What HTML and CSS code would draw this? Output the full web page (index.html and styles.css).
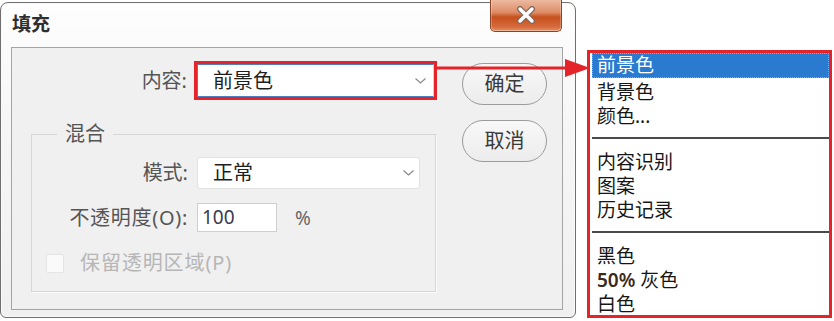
FILE: index.html
```html
<!DOCTYPE html>
<html lang="zh-CN">
<head>
<meta charset="utf-8">
<title>填充</title>
<link rel="stylesheet" href="styles.css">
</head>
<body>
<div class="dialog">
  <div class="titlebar">
    <div class="title">填充</div>
    <div class="close">
      <svg width="24" height="18" viewBox="0 0 24 18">
        <path d="M6 3 L18 15 M18 3 L6 15" stroke="#7d6a60" stroke-width="6" stroke-linecap="round"/>
        <path d="M6 3 L18 15 M18 3 L6 15" stroke="#ffffff" stroke-width="3.4" stroke-linecap="round"/>
      </svg>
    </div>
  </div>
  <div class="panel">
    <div class="leftcol">
      <div class="row-content">
        <div class="label-content">内容:</div>
        <div class="redbox">
          <div class="select-blue">
            <span class="sel-text">前景色</span>
            <svg class="chev" width="11" height="6" viewBox="0 0 11 6"><path d="M0.5 0.5 L5.5 5 L10.5 0.5" fill="none" stroke="#8a8a8a" stroke-width="1.2"/></svg>
          </div>
        </div>
      </div>
      <div class="group">
        <span class="legend">混合</span>
        <div class="grow first">
          <div class="glabel">模式:</div>
          <div class="select-plain">
            <span class="sel-text">正常</span>
            <svg class="chev" width="11" height="6" viewBox="0 0 11 6"><path d="M0.5 0.5 L5.5 5 L10.5 0.5" fill="none" stroke="#8a8a8a" stroke-width="1.2"/></svg>
          </div>
        </div>
        <div class="grow second">
          <div class="glabel wide">不透明度<span class="lat">(O):</span></div>
          <div class="input">100</div>
          <span class="pct">%</span>
        </div>
        <div class="checkrow">
          <span class="checkbox"></span>
          <span class="checklabel">保留透明区域<span class="lat">(P)</span></span>
        </div>
      </div>
    </div>
    <div class="rightcol">
      <div class="btn">确定</div>
      <div class="btn btn2">取消</div>
    </div>
  </div>
</div>

<div class="popup">
  <div class="item selected">前景色</div>
  <div class="item after-sel">背景色</div>
  <div class="item">颜色<span class="lat">...</span></div>
  <div class="sep"></div>
  <div class="item">内容识别</div>
  <div class="item">图案</div>
  <div class="item">历史记录</div>
  <div class="sep"></div>
  <div class="item">黑色</div>
  <div class="item"><span class="lat bold">50%</span> 灰色</div>
  <div class="item">白色</div>
</div>

<svg class="arrow" width="154" height="20" viewBox="0 0 154 20">
  <line x1="0" y1="10" x2="134" y2="10" stroke="#e5242a" stroke-width="3"/>
  <polygon points="128,1 153,10 128,19" fill="#e5242a"/>
</svg>
</body>
</html>
```

FILE: styles.css
```css
* { box-sizing: border-box; }

html, body {
  margin: 0;
  padding: 0;
}

body {
  width: 834px;
  height: 321px;
  background: #ffffff;
  position: relative;
  overflow: hidden;
  display: flex;
  align-items: flex-start;
  font-family: "Noto Sans", "Noto Sans CJK SC", sans-serif;
  color: #333;
}

.lat { font-family: "Noto Sans", "Noto Sans CJK SC", sans-serif; }

.dialog {
  width: 576px;
  height: 316px;
  margin-top: 2px;
  border: 1px solid #6f6f6f;
  border-radius: 8px 8px 6px 6px;
  background: linear-gradient(#fefefe 0%, #f6f6f6 40%, #f0f0f0 100%);
  box-shadow: inset 0 0 0 1px #fafafa;
  display: flex;
  flex-direction: column;
}

.titlebar {
  height: 44px;
  display: flex;
  justify-content: space-between;
  align-items: flex-start;
  padding-left: 11px;
}

.title {
  padding-top: 9px;
  font-size: 19px;
  line-height: 24px;
  font-weight: 700;
  color: #2e2e2e;
}

.close {
  width: 72px;
  height: 32px;
  margin-top: -3px;
  margin-right: 13px;
  border: 1px solid #8c4428;
  border-top: none;
  border-radius: 0 0 5px 5px;
  background: linear-gradient(#ecb9a0 0%, #de8c66 40%, #c8501e 55%, #d4683a 85%, #e68e62 100%);
  box-shadow: inset 0 -1px 0 rgba(255,255,255,0.35), inset 1px 0 0 rgba(255,255,255,0.25), inset -1px 0 0 rgba(255,255,255,0.25);
  display: flex;
  align-items: center;
  justify-content: center;
}

.close svg { margin-top: -2px; }

.panel {
  margin: 0 12px 0 10px;
  height: 263px;
  border: 1px solid #a4a4a4;
  background: #f0f0f0;
  padding-top: 13px;
  display: flex;
  align-items: flex-start;
}

.leftcol {
  display: flex;
  flex-direction: column;
}

.row-content {
  display: flex;
  align-items: center;
  height: 39px;
}

.label-content,
.glabel {
  text-align: right;
  font-size: 20px;
  line-height: 24px;
  color: #555;
}

.glabel.wide { letter-spacing: 0.7px; }

.label-content { width: 175px; margin-right: 7px; }

.redbox {
  width: 243px;
  height: 39px;
  border: 3px solid #e5242a;
}

.select-blue {
  height: 100%;
  background: #fff;
  border: 1px solid #4f7fc0;
  border-right-color: #c9d6e8;
  display: flex;
  align-items: center;
  justify-content: space-between;
  padding: 0 7px 0 15px;
}

.sel-text {
  font-size: 20px;
  line-height: 24px;
  color: #1e1e1e;
}

.chev { display: block; }

.group {
  position: relative;
  margin-top: 34px;
  margin-left: 19px;
  width: 405px;
  height: 158px;
  border: 1px solid #d6d6d6;
  box-shadow: 1px 1px 0 #fbfbfb;
}

.legend {
  position: absolute;
  left: 25px;
  top: -13px;
  padding: 0 8px;
  background: #f0f0f0;
  font-size: 20px;
  line-height: 24px;
  color: #555;
}

.grow {
  display: flex;
  align-items: center;
}

.grow.first { margin-top: 22px; }
.grow.second { margin-top: 14px; }

.glabel { width: 156px; margin-right: 9px; }

.select-plain {
  width: 223px;
  height: 32px;
  background: #fff;
  border: 1px solid #e2e2e2;
  border-radius: 3px;
  display: flex;
  align-items: center;
  justify-content: space-between;
  padding: 0 5px 0 15px;
}

.input {
  width: 80px;
  height: 29px;
  background: #fff;
  border: 1px solid #cfcfcf;
  padding-left: 4px;
  font-size: 19px;
  line-height: 27px;
  color: #3a3a50;
}

.pct {
  margin-left: 18px;
  font-size: 19px;
  line-height: 24px;
  color: #666;
}

.checkrow {
  display: flex;
  align-items: center;
  margin-top: 19px;
  padding-left: 14px;
}

.checkbox {
  width: 18px;
  height: 19px;
  background: #fafafa;
  border: 1px solid #e4e4e4;
  border-radius: 2px;
}

.checklabel {
  margin-left: 16px;
  font-size: 20px;
  line-height: 24px;
  letter-spacing: 0.9px;
  color: #b6b6b6;
}

.rightcol {
  margin-left: 25px;
  margin-top: 2px;
  display: flex;
  flex-direction: column;
}

.btn {
  width: 85px;
  height: 42px;
  border: 1px solid #9c9c9c;
  border-radius: 21px;
  background: linear-gradient(#f8f8f8, #ececec);
  font-size: 20px;
  line-height: 40px;
  text-align: center;
  color: #3a3a3a;
}

.btn2 { margin-top: 15px; }

.popup {
  margin-left: 11px;
  margin-top: 50px;
  width: 245px;
  height: 268px;
  border: 3px solid #e5242a;
  background: #fff;
  padding-left: 2px;
  overflow: hidden;
}

.item {
  height: 24px;
  line-height: 24px;
  padding-left: 5px;
  font-size: 19px;
  color: #161616;
  white-space: nowrap;
}

.item.selected {
  height: 25px;
  line-height: 25px;
  background: #2a7acf;
  color: #fff;
  outline: 1px dotted #c4a080;
  outline-offset: -1px;
}

.item.after-sel { margin-top: 2px; }

.bold { font-weight: 600; color: #3a2a1a; }

.sep {
  height: 2px;
  background: #4a4a4a;
  margin: 9px 0 11px 0;
}

.arrow {
  position: absolute;
  left: 437px;
  top: 58px;
}
```
